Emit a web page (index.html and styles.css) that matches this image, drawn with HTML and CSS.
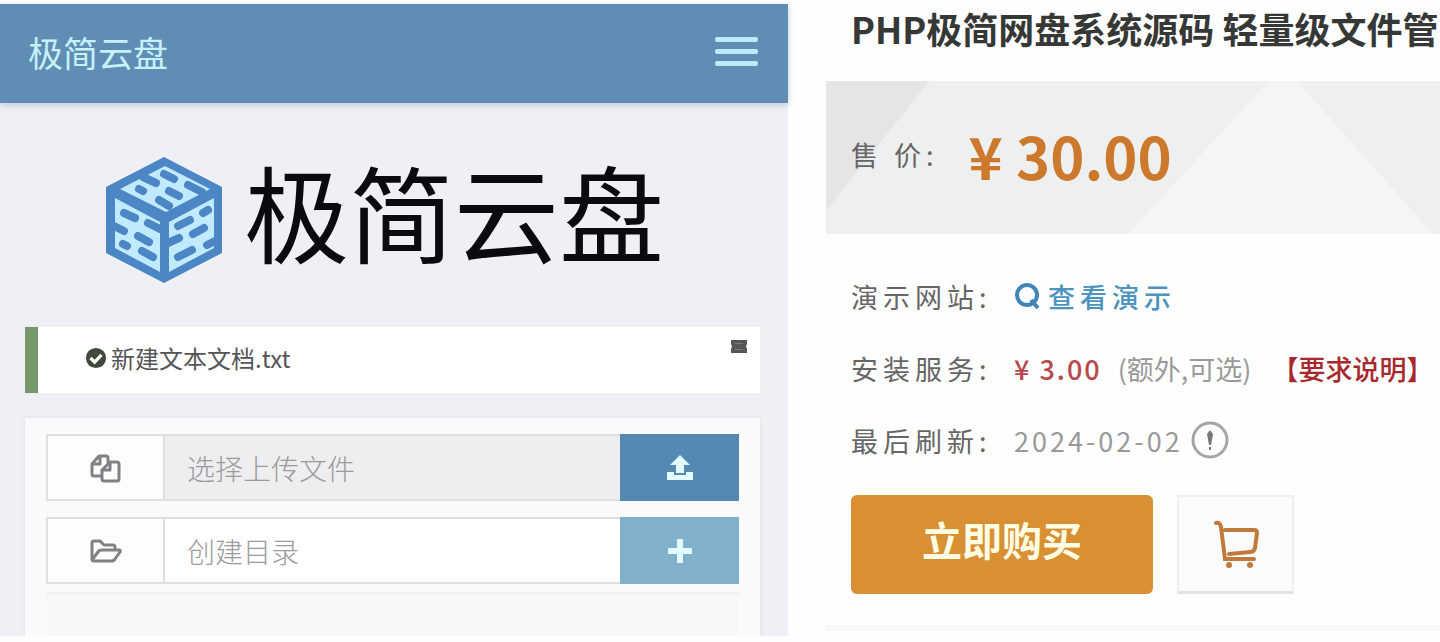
FILE: index.html
```
<!DOCTYPE html>
<html lang="zh-CN">
<head>
<meta charset="UTF-8">
<meta name="viewport" content="width=device-width, initial-scale=1.0">
<title>极简云盘</title>
<link rel="stylesheet" href="styles.css">
</head>
<body>

<div class="page">

  <section class="disk">
    <header class="navbar">
      <a href="#" class="brand">极简云盘</a>
      <button type="button" class="menu" aria-label="菜单"><span></span><span></span><span></span></button>
    </header>

    <div class="logo">
      <svg class="cube" viewBox="0 0 120 128" aria-hidden="true">
        <path fill="#4c86c4" d="M60 1 118 31V97L60 127 2 97V31Z"/>
        <g fill="#bfeaff">
          <path d="M61 10 106 33 62 56 16 33Z"/>
          <path d="M11 42 56 66V116L11 92Z"/>
          <path d="M65 66 110 42V92L65 116Z"/>
        </g>
        <g stroke="#4c86c4" stroke-width="8" stroke-linecap="round">
          <path d="M60 18 70 23M84 29 98 36M39 21 52 27M65 35 75 40M35 33 39 35M55 44 65 50"/>
          <path d="M20 57 31 62M44 67 56 73M10 70 20 75M34 80 45 86M19 88 23 90M38 95 49 101"/>
          <path d="M74 70 86 64M99 57 104 54M64 87 75 82M89 78 100 72M74 101 88 94M103 89 111 85"/>
        </g>
      </svg>
      <span>极简云盘</span>
    </div>

    <div class="alert">
      <svg class="check" viewBox="0 0 24 24" aria-hidden="true">
        <circle cx="12" cy="12" r="11" fill="#3f4a3b"/>
        <path d="M6 12l4.500 4.500L18 8.500" fill="none" stroke="#fff" stroke-width="3.500"/>
      </svg>
      <span>新建文本文档.txt</span>
      <button type="button" class="close" aria-label="关闭">
        <svg viewBox="0 0 18 15" aria-hidden="true">
          <path fill="#55565a" d="M1 1H17V5L16 7.500 17 10V14H1V10L2 7.500 1 5Z"/>
          <path stroke="#7b7c80" d="M5 4.500H13M5 10.500H13"/>
        </svg>
      </button>
    </div>

    <div class="panel">
      <div class="group">
        <label for="file" class="addon" aria-label="上传文件">
          <svg viewBox="0 0 32 32" aria-hidden="true">
            <path d="M12 24H4Q2 24 2 22V12L9 4H16Q18 4 18 6V11M10 4V12H2M12 27V18L20 10H27Q29 10 29 12V27Q29 29 27 29H14Q12 29 12 27ZM20 10V18H12"/>
          </svg>
        </label>
        <input type="text" id="file" placeholder="选择上传文件" readonly>
        <button type="button" class="upload" aria-label="上传">
          <svg viewBox="0 0 28 28" aria-hidden="true">
            <path d="M14 1 24 11H18V19H10V11H4ZM1 18H8V21H20V18H27V26H1Z"/>
          </svg>
        </button>
      </div>
      <div class="group">
        <label for="folder" class="addon" aria-label="目录">
          <svg viewBox="0 0 32 32" aria-hidden="true">
            <path d="M2 25V8Q2 6 4 6H10L14 10H23Q25 10 25 12V15M2 25 8 17Q9 15 12 15H29Q31 15 30 17L25 24Q24 26 21 26H4Q2 26 2 24"/>
          </svg>
        </label>
        <input type="text" id="folder" placeholder="创建目录">
        <button type="button" class="create" aria-label="创建">
          <svg viewBox="0 0 28 28" aria-hidden="true">
            <path d="M11 2H17V11H26V17H17V26H11V17H2V11H11Z"/>
          </svg>
        </button>
      </div>
      <div class="list"></div>
    </div>
  </section>

  <section class="goods">
    <h1>PHP极简网盘系统源码 轻量级文件管</h1>

    <div class="price">
      <svg class="price-bg" viewBox="0 0 614 153" preserveAspectRatio="none" aria-hidden="true">
        <path fill="#e4e5e4" d="M0 0H103L0 130Z"/>
        <path fill="#f5f5f6" d="M302 153 443 0H471L607 153Z"/>
      </svg>
      <span class="name">售 价:</span>
      <strong>¥ 30.00</strong>
    </div>

    <div class="info">
      <div class="row">
        <span class="name">演示网站:</span>
        <a href="#" class="demo">
          <svg viewBox="0 0 26 28" aria-hidden="true">
            <circle cx="13" cy="13" r="10"/>
            <path d="M17 18 24 26"/>
          </svg>查看演示</a>
      </div>
      <div class="row">
        <span class="name">安装服务:</span>
        <span class="fee">¥ 3.00</span>
        <span class="note">(额外,可选)</span>
        <a href="#" class="rule">【要求说明】</a>
      </div>
      <div class="row">
        <span class="name">最后刷新:</span>
        <span class="date">2024-02-02</span>
        <svg class="tip" viewBox="0 0 38 38" aria-hidden="true">
          <circle cx="19" cy="19" r="17"/>
          <path class="mark" d="M19 9 22 13 20 24H18L16 13ZM18 26H20V29H18Z"/>
        </svg>
      </div>
    </div>

    <div class="actions">
      <button type="button" class="buy">立即购买</button>
      <button type="button" class="cart" aria-label="加入购物车">
        <svg viewBox="0 0 48 50" aria-hidden="true">
          <path d="M4 4Q8 3 9 8L13 40H42M13 11H42Q45 11 45 14L43 29Q42 33 38 33L17 35"/>
          <circle cx="17" cy="46" r="3"/>
          <circle cx="38" cy="46" r="3"/>
        </svg>
      </button>
    </div>
    <hr>
  </section>

</div>

</body>
</html>
```
FILE: styles.css
```
* {
    box-sizing: border-box;
}

body {
    margin: 0;
    background: #fefefe;
    font-family: "Noto Sans CJK SC", sans-serif;
    color: #666;
}

a {
    text-decoration: none;
}

button {
    padding: 0;
    border: 0;
    font-family: inherit;
    cursor: pointer;
}

svg {
    display: block;
    flex: none;
}

.page {
    display: grid;
    grid-template-columns: 788fr 652fr;
}

/* cloud disk */
.disk {
    display: flex;
    flex-direction: column;
    margin: 4px 0 6px;
    background: #efeff6;
}

.navbar {
    display: flex;
    align-items: center;
    justify-content: space-between;
    height: 99px;
    padding: 0 30px 4px 28px;
    background: #5f8db3;
    box-shadow: 0 2px 6px #bccbdc;
}

.brand {
    font-size: 35px;
    line-height: 50px;
    color: #c6f0fb;
}

.menu {
    display: flex;
    flex-direction: column;
    gap: 7px;
    width: 43px;
    background: none;
}

.menu span {
    height: 5px;
    width: 100%;
    border-radius: 2px;
    background: #b9ebfa;
}

.logo {
    display: flex;
    align-items: center;
    justify-content: center;
    gap: 20px;
    height: 224px;
    padding: 0 20px 12px 0;
    font-size: 105px;
    line-height: 140px;
    color: #0b0b0f;
}

.cube {
    width: 120px;
    height: 128px;
    margin-top: 22px;
}

.alert {
    display: flex;
    align-items: center;
    gap: 4px;
    height: 66px;
    margin: 0 28px 0 25px;
    padding: 0 0 4px 47px;
    border-left: 13px solid #769767;
    background: #fff;
    font-size: 24px;
    line-height: 36px;
    color: #555;
}

.check {
    width: 22px;
    height: 22px;
}

.close {
    align-self: flex-start;
    width: 18px;
    margin: 12px 12px 0 auto;
    background: none;
}

.panel {
    flex: 1;
    display: flex;
    flex-direction: column;
    gap: 16px;
    margin: 25px 28px 0 25px;
    padding: 16px 21px 0;
    background: #f9fafc;
    box-shadow: 0 0 4px #dedfe6;
    clip-path: inset(-4px -4px 0);
}

.group {
    display: flex;
    height: 67px;
}

.addon {
    display: flex;
    align-items: center;
    justify-content: center;
    width: 117px;
    border: 2px solid #dedfe1;
    border-right: 0;
    background: #fdfdfe;
}

.addon svg {
    width: 32px;
    height: 32px;
    fill: none;
    stroke: #808184;
    stroke-width: 3;
    stroke-linejoin: round;
}

.group input {
    flex: 1;
    min-width: 0;
    padding: 0 22px;
    border: 2px solid #dedfe1;
    border-right: 0;
    border-radius: 0;
    outline: 0;
    background: #fff;
    font-family: inherit;
    font-size: 28px;
    font-weight: 300;
    color: #666;
}

.group input:read-only {
    background: #eeeef0;
}

.group input::placeholder {
    color: #9b9b9e;
}

.group button {
    display: flex;
    align-items: center;
    justify-content: center;
    width: 119px;
}

.group button svg {
    width: 28px;
    height: 28px;
    fill: #e2fbff;
}

.upload {
    background: #5689b1;
}

.create {
    background: #81b0ca;
}

.list {
    flex: 1;
    min-height: 44px;
    margin-top: -8px;
    border-top: 2px solid #f0f1f3;
    background: #f7f8f9;
}

/* goods */
.goods {
    min-width: 0;
    padding-left: 38px;
}

h1 {
    margin: 0 0 25px;
    padding-left: 25px;
    font-size: 36px;
    line-height: 56px;
    white-space: nowrap;
    overflow: hidden;
    color: #363836;
}

.name {
    font-size: 27px;
    letter-spacing: 5px;
    white-space: pre;
}

.price {
    position: relative;
    display: flex;
    align-items: center;
    gap: 30px;
    height: 153px;
    padding: 0 0 6px 25px;
    background: #eeefef;
}

.price-bg {
    position: absolute;
    inset: 0;
    width: 100%;
    height: 100%;
}

.price .name,
.price strong {
    position: relative;
}

.price strong {
    font-size: 58px;
    line-height: 80px;
    color: #cd792d;
}

.info {
    padding: 26px 0 0 25px;
}

.row {
    display: flex;
    align-items: center;
    height: 72px;
    font-size: 27px;
    white-space: nowrap;
}

.row .name {
    width: 163px;
}

.demo {
    display: flex;
    align-items: center;
    gap: 8px;
    letter-spacing: 5px;
    font-weight: 500;
    color: #4c93bd;
}

.demo svg {
    width: 26px;
    height: 28px;
    fill: none;
    stroke: #3f85b8;
    stroke-width: 4;
}

.fee {
    font-weight: 500;
    letter-spacing: 2px;
    color: #b9484a;
}

.note {
    margin-left: 16px;
    color: #999;
}

.rule {
    margin-left: 20px;
    font-weight: 500;
    color: #a8292d;
}

.row .date {
    letter-spacing: 3px;
    color: #999;
}

.tip {
    width: 38px;
    height: 38px;
    margin-left: 8px;
    fill: none;
    stroke: #a5a5a5;
    stroke-width: 3;
}

.tip .mark {
    fill: #777;
    stroke: none;
}

.actions {
    display: flex;
    gap: 24px;
    padding: 19px 0 0 25px;
}

.buy {
    width: 302px;
    height: 99px;
    padding-bottom: 12px;
    border-radius: 6px;
    background: #d89033;
    font-size: 40px;
    font-weight: 700;
    color: #fffce4;
}

.cart {
    display: flex;
    align-items: center;
    justify-content: center;
    width: 117px;
    height: 99px;
    border: 2px solid #efefef;
    border-bottom: 3px solid #e2e2e2;
    background: #fbfbfb;
}

.cart svg {
    width: 48px;
    height: 50px;
    fill: none;
    stroke: #c07b3c;
    stroke-width: 4;
    stroke-linecap: round;
}

.cart circle {
    fill: #c07b3c;
    stroke: none;
}

hr {
    height: 6px;
    margin: 31px 0 0;
    border: 0;
    background: #f8f8f8;
}
```
